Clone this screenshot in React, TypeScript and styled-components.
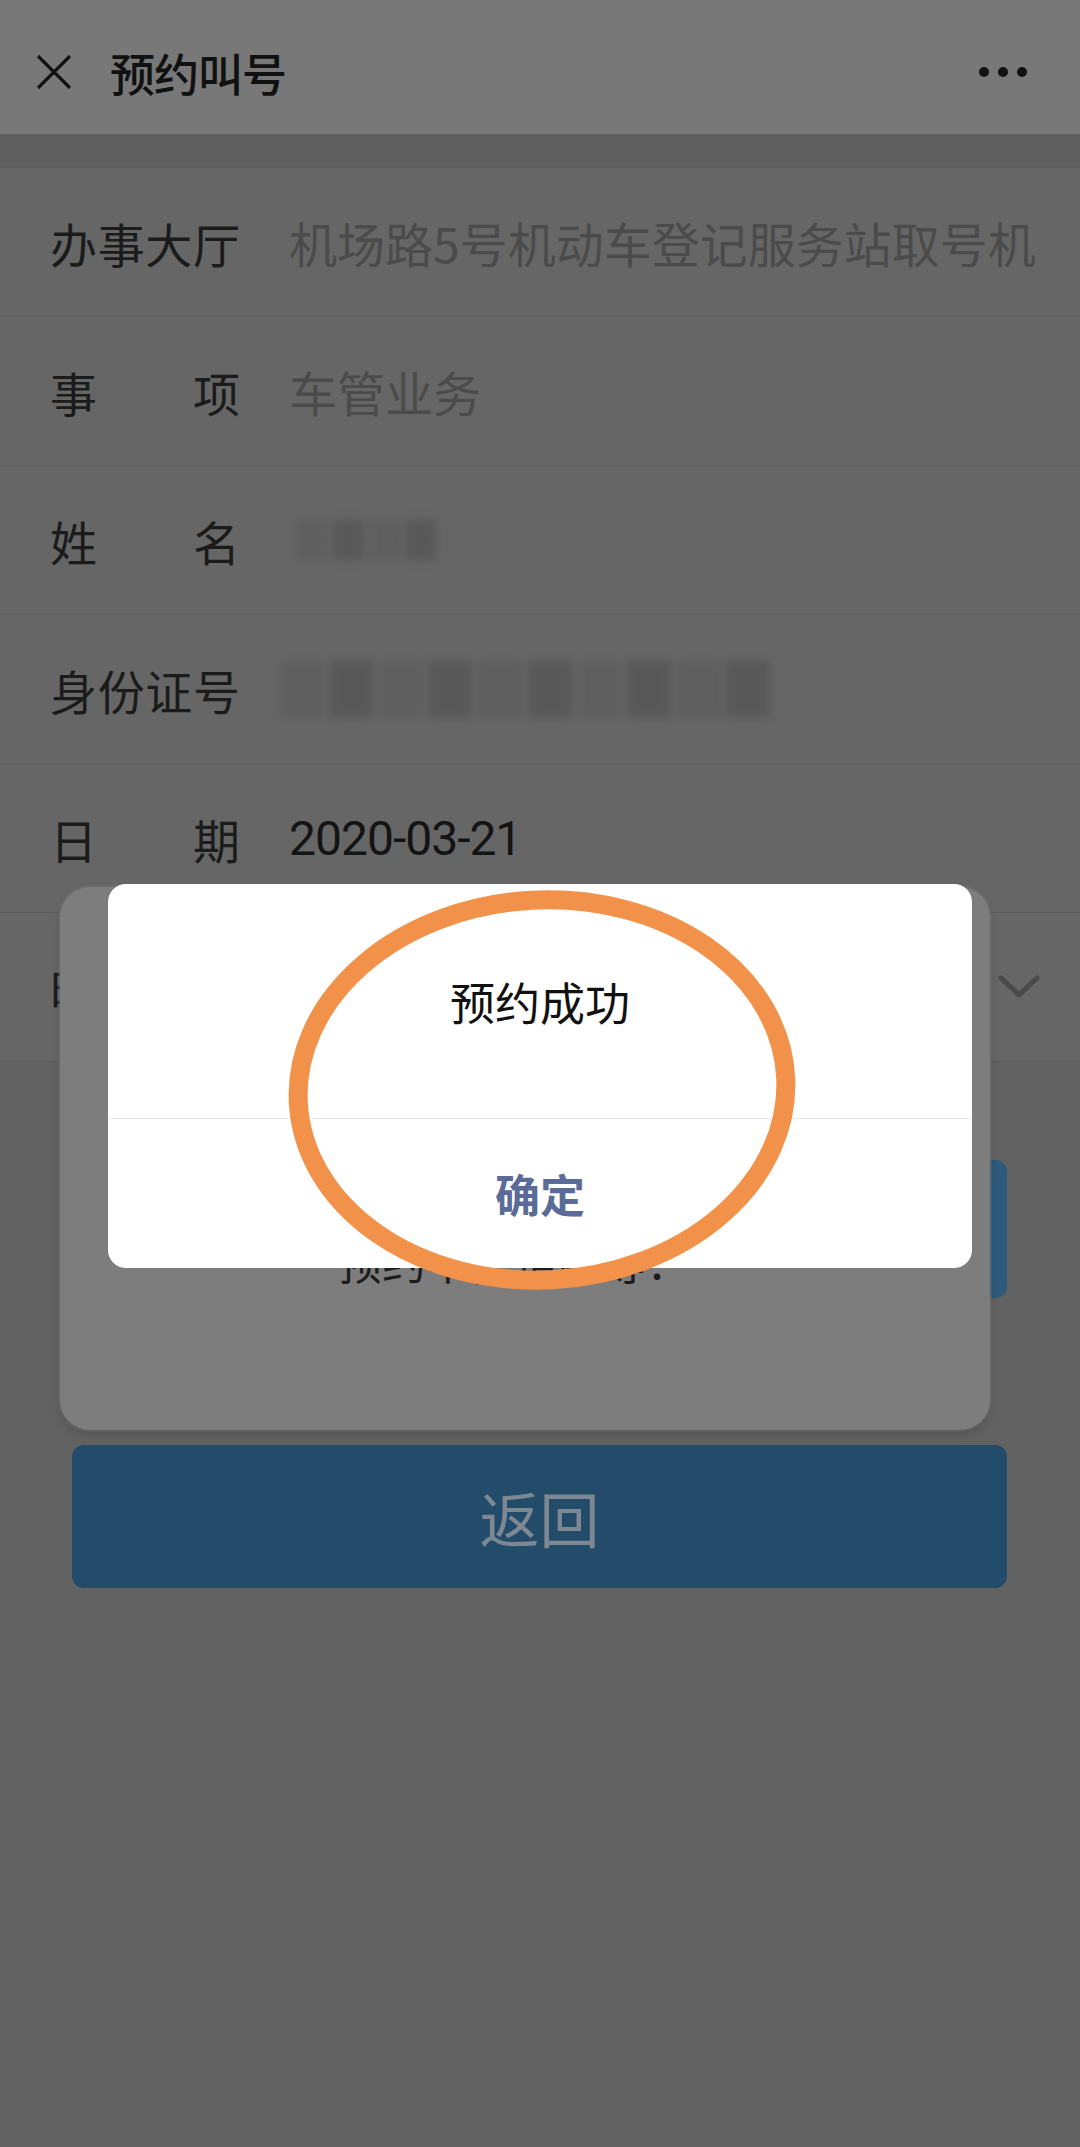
import React from 'react';
import styled, { createGlobalStyle } from 'styled-components';

const GlobalStyle = createGlobalStyle`
  html, body {
    margin: 0;
    padding: 0;
    background: #626262;
  }
  body {
    font-family: "Noto Sans CJK SC", "Noto Sans", Roboto, sans-serif;
  }
`;

const Page = styled.div`
  position: relative;
  width: 1080px;
  min-height: 2147px;
  background: #626262;
  overflow: hidden;
`;

const Header = styled.header`
  height: 134px;
  box-sizing: border-box;
  padding: 10px 53px 0 36px;
  background: #787878;
  display: flex;
  align-items: center;
`;

const Title = styled.h1`
  margin: 0 0 0 38px;
  font-size: 45px;
  font-weight: 500;
  color: #111;
  letter-spacing: -1px;
`;

const Dots = styled.div`
  margin-left: auto;
  display: flex;
  gap: 9px;

  span {
    width: 10px;
    height: 10px;
    border-radius: 50%;
    background: #111;
  }
`;

const Band = styled.div`
  height: 33px;
  background: #5f5f5f;
  border-bottom: 1px solid #595959;
`;

const Row = styled.div`
  height: 148px;
  padding-left: 50px;
  background: #666;
  border-bottom: 1px solid #5b5b5b;
  display: flex;
  align-items: center;
`;

const Label = styled.div`
  width: 190px;
  flex-shrink: 0;
  display: flex;
  justify-content: space-between;
  font-size: 47px;
  color: #1b1b1b;
  white-space: nowrap;
`;

const Value = styled.div<{ $dark?: boolean }>`
  margin-left: 49px;
  font-size: 48px;
  color: ${({ $dark }) => ($dark ? '#141414' : '#4b4b4b')};
  white-space: nowrap;
  letter-spacing: ${({ $dark }) => ($dark ? '-1px' : '0')};
  font-family: ${({ $dark }) => ($dark ? 'Roboto, "Noto Sans CJK SC", sans-serif' : 'inherit')};
`;

const Blurred = styled.div<{ $w: number; $h: number; $offset: number }>`
  margin-left: ${({ $offset }) => $offset}px;
  width: ${({ $w }) => $w}px;
  height: ${({ $h }) => $h}px;
  display: flex;
  gap: 6px;
  filter: blur(5px);

  span {
    flex: 1;
    background: #585858;
  }
  span:nth-child(odd) {
    background: #5e5e5e;
  }
`;

const Chevron = styled.svg`
  margin-left: auto;
  margin-right: 40px;
  width: 42px;
  height: 24px;
`;

const Actions = styled.div`
  padding: 98px 73px 0 72px;
  display: flex;
  flex-direction: column;
  gap: 147px;
`;

const Button = styled.div<{ $muted?: boolean }>`
  height: ${({ $muted }) => ($muted ? 143 : 138)}px;
  border-radius: 12px;
  background: ${({ $muted }) => ($muted ? '#234b6a' : '#2c5b7e')};
  color: #7d8893;
  font-size: 60px;
  display: flex;
  align-items: center;
  justify-content: center;
`;

const LoadingCard = styled.div`
  position: absolute;
  left: 60px;
  top: 887px;
  width: 930px;
  height: 543px;
  box-sizing: border-box;
  padding: 344px 22px 0 0;
  border-radius: 30px;
  background: #7d7d7d;
  box-shadow: 0 5px 10px rgba(0, 0, 0, 0.15), 0 0 0 2px rgba(118, 118, 118, 0.5);
  text-align: center;
  font-size: 44px;
  line-height: 60px;
  color: #1c1c1c;
`;

const Dialog = styled.div`
  position: absolute;
  left: 108px;
  top: 884px;
  width: 864px;
  height: 384px;
  border-radius: 18px;
  background: #fff;
  display: flex;
  flex-direction: column;
  overflow: hidden;
`;

const DialogBody = styled.div`
  height: 234px;
  border-bottom: 1px solid #e8e8e8;
  display: flex;
  align-items: center;
  justify-content: center;
  font-size: 45px;
  color: #111;
`;

const DialogButton = styled.div`
  flex: 1;
  display: flex;
  align-items: center;
  justify-content: center;
  font-size: 45px;
  font-weight: 700;
  color: #5a6b98;
`;

const Mark = styled.svg`
  position: absolute;
  left: 0;
  top: 0;
  width: 1080px;
  height: 1400px;
  pointer-events: none;
`;

const spread = (text: string) => text.split('').map((ch, i) => <span key={i}>{ch}</span>);

const App = (): JSX.Element => (
  <>
    <GlobalStyle />
    <Page>
      <Header>
        <svg width="36" height="34" viewBox="0 0 36 34">
          <path d="M2 1 L34 33 M34 1 L2 33" stroke="#111" strokeWidth="3.2" fill="none" />
        </svg>
        <Title>预约叫号</Title>
        <Dots>
          <span />
          <span />
          <span />
        </Dots>
      </Header>
      <Band />
      <Row>
        <Label>{spread('办事大厅')}</Label>
        <Value>机场路5号机动车登记服务站取号机</Value>
      </Row>
      <Row>
        <Label>{spread('事项')}</Label>
        <Value>车管业务</Value>
      </Row>
      <Row>
        <Label>{spread('姓名')}</Label>
        <Blurred $w={141} $h={40} $offset={56}>
          <span />
          <span />
          <span />
          <span />
        </Blurred>
      </Row>
      <Row>
        <Label>{spread('身份证号')}</Label>
        <Blurred $w={490} $h={58} $offset={40}>
          {Array.from({ length: 10 }, (_, i) => (
            <span key={i} />
          ))}
        </Blurred>
      </Row>
      <Row>
        <Label>{spread('日期')}</Label>
        <Value $dark>2020-03-21</Value>
      </Row>
      <Row>
        <Label>{spread('时段')}</Label>
        <Chevron viewBox="0 0 42 24">
          <path d="M3 3 L21 20 L39 3" stroke="#4a4a4a" strokeWidth="5" fill="none" strokeLinecap="round" strokeLinejoin="round" />
        </Chevron>
      </Row>
      <Actions>
        <Button>提交</Button>
        <Button $muted>返回</Button>
      </Actions>

      <LoadingCard>预约中，请稍等：</LoadingCard>

      <Dialog>
        <DialogBody>预约成功</DialogBody>
        <DialogButton>确定</DialogButton>
      </Dialog>

      <Mark viewBox="0 0 1080 1400">
        <ellipse
          cx="542"
          cy="1090"
          rx="244"
          ry="190"
          fill="none"
          stroke="#f2924a"
          strokeWidth="19"
          transform="rotate(-3 542 1090)"
        />
      </Mark>
    </Page>
  </>
);

export default App;
